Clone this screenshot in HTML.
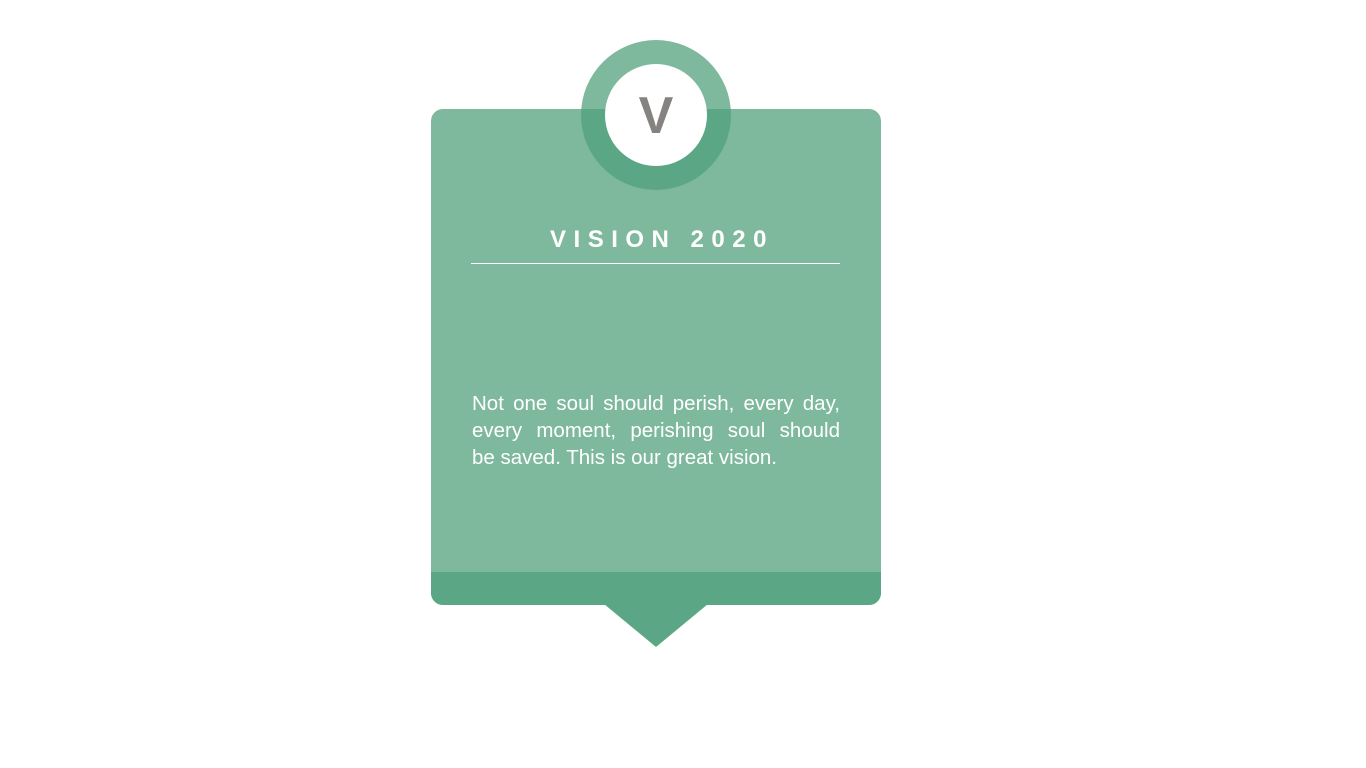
<!DOCTYPE html>
<html><head><style>
body{margin:0;width:1366px;height:768px;background:#fff;position:relative;overflow:hidden;font-family:"Liberation Sans",sans-serif}
.card{position:absolute;left:431px;top:109px;width:450px;height:496px;background:#7eb99d;border-radius:12px;overflow:hidden}
.band{position:absolute;left:0;bottom:0;width:100%;height:33px;background:#5ba785}
.tri{position:absolute;left:604px;top:604px;width:0;height:0;border-left:52px solid transparent;border-right:52px solid transparent;border-top:43px solid #5ba785}
.ring{position:absolute;left:581px;top:40px;width:150px;height:150px;border-radius:50%;background:linear-gradient(#7eb99d 0,#7eb99d 69px,#5ba785 69px)}
.inner{position:absolute;left:605px;top:64px;width:102px;height:102px;border-radius:50%;background:#fff;text-align:center;line-height:104px;font-weight:bold;font-size:52px;color:#858280}
.title{position:absolute;left:431px;width:450px;top:226px;text-align:center;color:#fff;font-weight:bold;font-size:24px;letter-spacing:7.5px;padding-left:12px;box-sizing:border-box}
.line{position:absolute;left:471px;top:263px;width:369px;height:1px;background:#fff}
.txt{position:absolute;left:472px;top:390px;width:368px;color:#fff;font-size:20.5px;line-height:27px}
.j{text-align:justify;text-align-last:justify;white-space:nowrap}
</style></head><body>
<div class="card"><div class="band"></div></div>
<div class="tri"></div>
<div class="ring"></div>
<div class="inner">V</div>
<div class="title">VISION 2020</div>
<div class="line"></div>
<div class="txt"><div class="j">Not one soul should perish, every day,</div><div class="j">every moment, perishing soul should</div><div>be saved. This is our great vision.</div></div>
</body></html>
